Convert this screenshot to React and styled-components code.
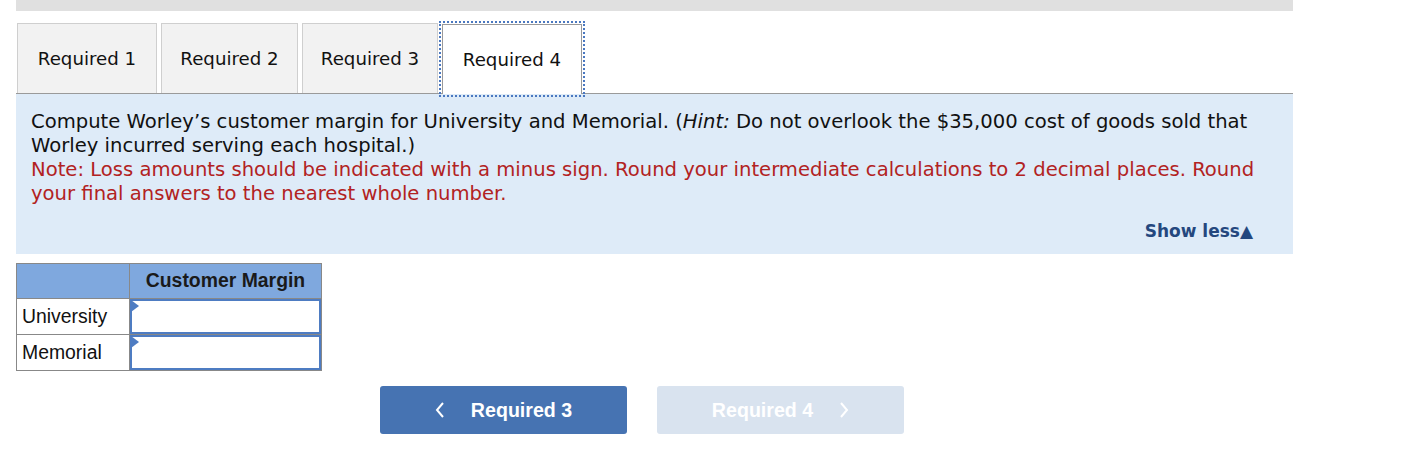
import React from "react";
import styled, { createGlobalStyle } from "styled-components";

const GlobalStyles = createGlobalStyle`
  body {
    margin: 0;
    background: #ffffff;
    font-family: "DejaVu Sans", Verdana, sans-serif;
  }
`;

const Page = styled.div`
  width: 1277px;
  margin-left: 16px;
`;

const TopBar = styled.div`
  height: 11px;
  background: #e0e0e0;
`;

const TabRow = styled.div`
  display: flex;
  align-items: flex-end;
  gap: 4px;
  margin-top: 12px;
  padding-left: 1px;
  border-bottom: 1px solid #9a9a9a;
`;

const Tab = styled.div`
  box-sizing: border-box;
  width: ${(p) => p.w}px;
  height: 70px;
  display: flex;
  align-items: center;
  justify-content: center;
  font-size: 18.2px;
  color: #111;
  background: ${(p) => (p.active ? "#ffffff" : "#f2f2f2")};
  border: 1px solid ${(p) => (p.active ? "#9a9a9a" : "#cfcfcf")};
  border-bottom: none;
  outline: ${(p) => (p.active ? "2px dotted #4a78c0" : "none")};
  outline-offset: 1px;
  margin-bottom: ${(p) => (p.active ? "-1px" : "0")};
`;

const Panel = styled.div`
  background: #deebf8;
  padding: 16px 34px 11px 15px;
  font-size: 19.6px;
  line-height: 24px;
  color: #111;
`;

const Note = styled.div`
  color: #b22222;
`;

const ShowLess = styled.div`
  margin-top: 13px;
  padding-right: 6px;
  text-align: right;
  font-size: 17px;
  font-weight: bold;
  color: #24477e;
  line-height: 24px;
`;

const Table = styled.table`
  margin-top: 9px;
  border-collapse: collapse;
  font-family: "Liberation Sans", Arial, sans-serif;
  font-size: 19.4px;
  color: #111;
`;

const HeadCell = styled.th`
  height: 34px;
  width: ${(p) => p.w}px;
  padding: 0;
  background: #7fa8de;
  border: 1px solid #888;
  font-weight: bold;
  color: #1a1a1a;
  text-align: center;
  vertical-align: top;
  line-height: 32px;
`;

const LabelCell = styled.td`
  height: 35px;
  padding: 0 5px;
  border: 1px solid #888;
  background: #fff;
`;

const InputCell = styled.td`
  position: relative;
  padding: 0;
  border: 1px solid #888;
  background: #fff;
`;

const InputBox = styled.div`
  box-sizing: border-box;
  height: 35px;
  border: 2px solid #4e7cc2;
  background: #fff;
`;

const Marker = styled.span`
  position: absolute;
  left: 1px;
  top: 1px;
  width: 0;
  height: 0;
  border-top: 6px solid transparent;
  border-bottom: 6px solid transparent;
  border-left: 8px solid #4e7cc2;
`;

const NavRow = styled.div`
  display: flex;
  gap: 30px;
  margin-top: 15px;
  padding-left: 364px;
`;

const NavButton = styled.div`
  width: 247px;
  height: 48px;
  border-radius: 3px;
  display: flex;
  align-items: center;
  justify-content: center;
  gap: 26px;
  background: ${(p) => (p.disabled ? "#d9e3ef" : "#4673b2")};
  color: #ffffff;
  font-family: "Liberation Sans", Arial, sans-serif;
  font-weight: bold;
  font-size: 19.6px;
  box-sizing: border-box;
`;

const Chevron = ({ dir }) => (
  <svg width="10" height="18" viewBox="0 0 10 18">
    <polyline
      points={dir === "left" ? "8,2 2,9 8,16" : "2,2 8,9 2,16"}
      fill="none"
      stroke="#fff"
      strokeWidth="2"
    />
  </svg>
);

const tabs = [
  { label: "Required 1", w: 140 },
  { label: "Required 2", w: 137 },
  { label: "Required 3", w: 136 },
  { label: "Required 4", w: 140, active: true },
];

export default function App() {
  return (
    <Page>
      <GlobalStyles />
      <TopBar />
      <TabRow>
        {tabs.map((t) => (
          <Tab key={t.label} w={t.w} active={t.active}>
            {t.label}
          </Tab>
        ))}
      </TabRow>
      <Panel>
        <div>
          Compute Worley’s customer margin for University and Memorial. (
          <i>Hint:</i> Do not overlook the $35,000 cost of goods sold that
          Worley incurred serving each hospital.)
        </div>
        <Note>
          Note: Loss amounts should be indicated with a minus sign. Round your
          intermediate calculations to 2 decimal places. Round your final
          answers to the nearest whole number.
        </Note>
        <ShowLess>Show less▲</ShowLess>
      </Panel>
      <Table>
        <thead>
          <tr>
            <HeadCell w={112} />
            <HeadCell w={191}>Customer Margin</HeadCell>
          </tr>
        </thead>
        <tbody>
          {["University", "Memorial"].map((r) => (
            <tr key={r}>
              <LabelCell>{r}</LabelCell>
              <InputCell>
                <InputBox />
                <Marker />
              </InputCell>
            </tr>
          ))}
        </tbody>
      </Table>
      <NavRow>
        <NavButton>
          <Chevron dir="left" />
          Required 3
        </NavButton>
        <NavButton disabled>
          Required 4
          <Chevron dir="right" />
        </NavButton>
      </NavRow>
    </Page>
  );
}
